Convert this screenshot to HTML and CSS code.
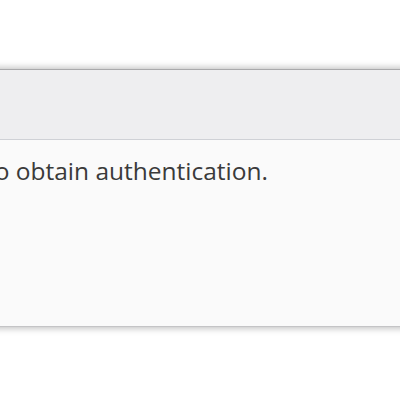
FILE: index.html
```html
<!DOCTYPE html>
<html>
<head>
    <title>Authentication</title>
    <link rel="stylesheet" href="styles.css">
</head>
<body>
    <div class="dialog">
        <div class="dialog-header"></div>
        <div class="dialog-body">
            <p class="message">to obtain authentication.</p>
        </div>
    </div>
</body>
</html>
```

FILE: styles.css
```css
html, body {
    margin: 0;
    height: 100%;
    overflow: hidden;
    background-color: #ffffff;
    font-family: "Open Sans", "Noto Sans", sans-serif;
    color: #3a3a3a; /* Message text */
}

.dialog {
    margin-top: 69px;
    margin-left: -300px;
    width: 1000px;
    border-top: 1px solid #a9a9ab;
    border-bottom: 1px solid #c4c4c6;
    box-shadow: 0 0 7px 1px rgba(0, 0, 0, 0.28);
    background-color: #fafafa;
}

.dialog-header {
    height: 69px;
    background-color: #eeeef0; /* Title band */
    border-bottom: 1px solid #cfd1d6;
}

.dialog-body {
    height: 186px;
}

.message {
    margin: 0;
    padding-top: 16px;
    font-size: 24.5px;
    line-height: 30px;
    white-space: nowrap;
    text-align: right;
    width: 568px;
}
```
